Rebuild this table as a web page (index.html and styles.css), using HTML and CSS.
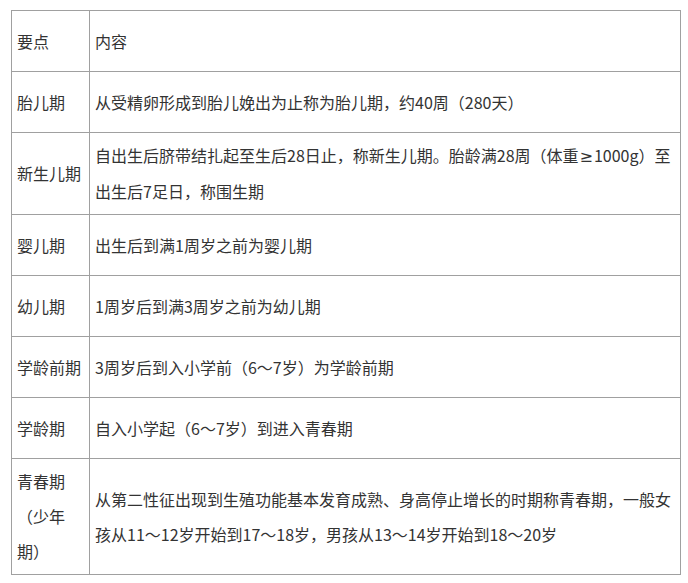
FILE: index.html
```html
<!DOCTYPE html>
<html lang="zh-CN">
<head>
<meta charset="utf-8">
<link rel="stylesheet" href="styles.css">
</head>
<body>
<div class="page">
<table class="stages">
<colgroup><col class="col-key"><col class="col-val"></colgroup>
<tbody>
<tr><td>要点</td><td>内容</td></tr>
<tr><td>胎儿期</td><td>从受精卵形成到胎儿娩出为止称为胎儿期，约40周（280天）</td></tr>
<tr><td>新生儿期</td><td>自出生后脐带结扎起至生后28日止，称新生儿期。胎龄满28周（体重<span class="sym">≥</span>1000g）至出生后7足日，称围生期</td></tr>
<tr><td>婴儿期</td><td>出生后到满1周岁之前为婴儿期</td></tr>
<tr><td>幼儿期</td><td>1周岁后到满3周岁之前为幼儿期</td></tr>
<tr><td>学龄前期</td><td>3周岁后到入小学前（6～7岁）为学龄前期</td></tr>
<tr><td>学龄期</td><td>自入小学起（6～7岁）到进入青春期</td></tr>
<tr><td>青春期（少年期）</td><td>从第二性征出现到生殖功能基本发育成熟、身高停止增长的时期称青春期，一般女孩从11～12岁开始到17～18岁，男孩从13～14岁开始到18～20岁</td></tr>
</tbody>
</table>
</div>
</body>
</html>
```
FILE: styles.css
```css
html, body {
  margin: 0;
  padding: 0;
  background: #ffffff;
}
.page {
  padding: 10px 0 0 11px;
}
.stages {
  border-collapse: collapse;
  table-layout: fixed;
  width: 670px;
  font-family: "Noto Sans CJK SC", "Noto Sans", sans-serif;
  font-size: 16px;
  color: #333333;
}
.col-key {
  width: 78px;
}
.stages td {
  border: 1px solid #a0a0a0;
  padding: 5px;
  height: 50px;
  line-height: 35px;
  vertical-align: middle;
  text-align: left;
  word-break: normal;
}
.sym {
  font-family: "Noto Sans", "DejaVu Sans", sans-serif;
  margin: 0 1px;
}
```
